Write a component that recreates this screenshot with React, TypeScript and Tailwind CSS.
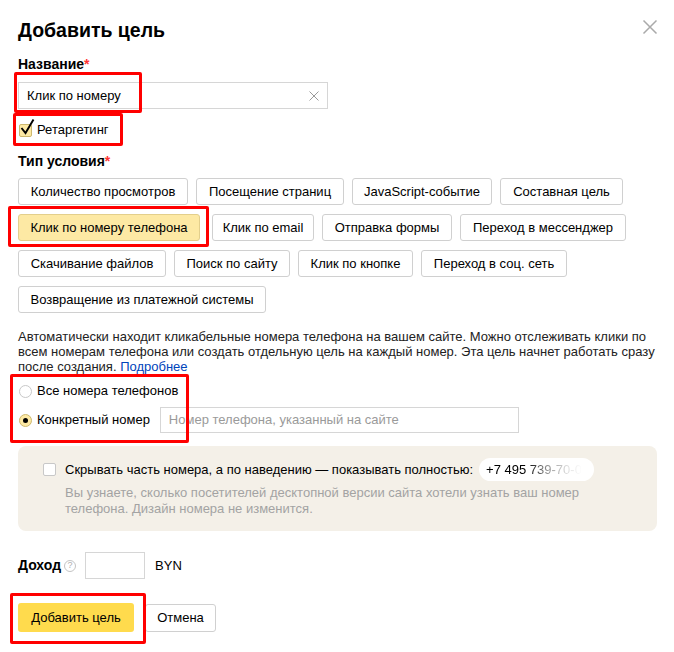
import React from "react";

const btn =
  "h-[27px] border border-[#d0d0d0] rounded-[3px] bg-white text-[13px] text-black flex items-center justify-center whitespace-nowrap";

function Btn({ w, children, sel, extra }: { w: string; children: React.ReactNode; sel?: boolean; extra?: string }) {
  return (
    <div
      className={
        sel
          ? `h-[27px] border border-[#e3cf8c] rounded-[3px] bg-[#fde9a4] text-[13px] text-black flex items-center justify-center whitespace-nowrap ${w} ${extra ?? ""}`
          : `${btn} ${w} ${extra ?? ""}`
      }
    >
      {children}
    </div>
  );
}

export default function App() {
  return (
    <div
      className="relative w-[674px] h-[652px] bg-white text-black overflow-hidden"
      style={{ fontFamily: '"Liberation Sans", Arial, sans-serif' }}
    >
      <div className="flex flex-col pl-[18px] pt-[16px]">
        <div className="text-[19.5px] leading-[28px] font-bold">Добавить цель</div>

        <div className="mt-[12px] text-[14px] leading-[16px] font-bold">
          Название<span className="text-[#ff3333]">*</span>
        </div>

        <div className="mt-[10px] w-[310px] h-[27px] border border-[#d6d6d6] flex items-center justify-between pl-[8px] pr-[8px]">
          <span className="text-[13px]">Клик по номеру</span>
          <svg width="10" height="10" viewBox="0 0 10 10">
            <path d="M0.5 0.5L9.5 9.5M9.5 0.5L0.5 9.5" stroke="#9a9a9a" strokeWidth="1" />
          </svg>
        </div>

        <div className="mt-[13px] h-[16px] flex items-center">
          <div className="relative w-[13px] h-[13px] ml-[1px] rounded-[2px] border border-[#cdb86e] bg-[#fde9a4]">
            <svg className="absolute left-[0px] top-[-7px]" width="15" height="18" viewBox="0 0 15 18">
              <path d="M1.5 10L5.5 15L13.5 1.5" stroke="#000" strokeWidth="1.9" fill="none" />
            </svg>
          </div>
          <span className="ml-[5px] text-[13px]">Ретаргетинг</span>
        </div>

        <div className="mt-[15px] text-[14px] leading-[16px] font-bold">
          Тип условия<span className="text-[#ff3333]">*</span>
        </div>

        <div className="mt-[9px] flex flex-col gap-[9px]">
          <div className="flex gap-[8px]">
            <Btn w="w-[170px]">Количество просмотров</Btn>
            <Btn w="w-[148px]">Посещение страниц</Btn>
            <Btn w="w-[140px]">JavaScript-событие</Btn>
            <Btn w="w-[123px]">Составная цель</Btn>
          </div>
          <div className="flex gap-[8px]">
            <Btn w="w-[182px]" sel>
              Клик по номеру телефона
            </Btn>
            <Btn w="w-[102px]" extra="ml-[4px]">
              Клик по email
            </Btn>
            <Btn w="w-[130px]">Отправка формы</Btn>
            <Btn w="w-[166px]">Переход в мессенджер</Btn>
          </div>
          <div className="flex gap-[8px]">
            <Btn w="w-[148px]">Скачивание файлов</Btn>
            <Btn w="w-[116px]">Поиск по сайту</Btn>
            <Btn w="w-[115px]">Клик по кнопке</Btn>
            <Btn w="w-[146px]">Переход в соц. сеть</Btn>
          </div>
          <div className="flex gap-[8px]">
            <Btn w="w-[248px]">Возвращение из платежной системы</Btn>
          </div>
        </div>

        <div className="mt-[16px] text-[13px] leading-[15px] text-[#222] whitespace-nowrap">
          Автоматически находит кликабельные номера телефона на вашем сайте. Можно отслеживать клики по
          <br />
          всем номерам телефона или создать отдельную цель на каждый номер. Эта цель начнет работать сразу
          <br />
          после создания. <span className="text-[#0044bb]">Подробнее</span>
        </div>

        <div className="mt-[9px] h-[16px] flex items-center">
          <div className="w-[13px] h-[13px] ml-[1px] rounded-full border border-[#c8c8c8] bg-white" />
          <span className="ml-[5px] text-[13px]">Все номера телефонов</span>
        </div>

        <div className="mt-[8px] h-[26px] flex items-center">
          <div className="w-[13px] h-[13px] ml-[1px] rounded-full border border-[#cdb86e] bg-[#fde9a4] flex items-center justify-center">
            <div className="w-[5px] h-[5px] rounded-full bg-black" />
          </div>
          <span className="ml-[5px] text-[13px]">Конкретный номер</span>
          <div className="ml-[10px] w-[359px] h-[26px] border border-[#d6d6d6] flex items-center pl-[8px] text-[13px] text-[#9a9a9a]">
            Номер телефона, указанный на сайте
          </div>
        </div>

        <div className="mt-[13px] w-[639px] rounded-[8px] bg-[#f4f0e8] pl-[25px] pt-[12px] pb-[14px]">
          <div className="h-[23px] flex items-center">
            <div className="w-[13px] h-[13px] rounded-[2px] border border-[#c8c8c8] bg-white" />
            <span className="ml-[9px] text-[13px]">
              Скрывать часть номера, а по наведению — показывать полностью:
            </span>
            <div className="ml-[6px] w-[115px] h-[23px] rounded-full bg-white flex items-center pl-[7px] text-[13px]">
              <span className="bg-[linear-gradient(90deg,#000_0%,#000_42%,#888_62%,#ddd_85%,#fff_100%)] bg-clip-text text-transparent">
                +7 495 739-70-0
              </span>
            </div>
          </div>
          <div className="mt-[4px] pl-[22px] text-[13px] leading-[16px] text-[#a3a3a3] whitespace-nowrap">
            Вы узнаете, сколько посетителей десктопной версии сайта хотели узнать ваш номер
            <br />
            телефона. Дизайн номера не изменится.
          </div>
        </div>

        <div className="mt-[21px] h-[27px] flex items-center">
          <span className="text-[14px] font-bold">Доход</span>
          <div className="ml-[3px] w-[12px] h-[12px] rounded-full border border-[#c4c4c4] flex items-center justify-center text-[9px] leading-none text-[#b0b0b0]">
            ?
          </div>
          <div className="ml-[9px] w-[60px] h-[27px] border border-[#d6d6d6]" />
          <span className="ml-[10px] text-[13px]">BYN</span>
        </div>

        <div className="mt-[24px] flex items-center">
          <div className="w-[116px] h-[29px] rounded-[3px] bg-[#ffdb4d] flex items-center justify-center text-[13px]">
            Добавить цель
          </div>
          <div className="ml-[11px] w-[71px] h-[28px] rounded-[3px] border border-[#d0d0d0] bg-white flex items-center justify-center text-[13px]">
            Отмена
          </div>
        </div>
      </div>

      {/* close */}
      <svg className="absolute left-[642px] top-[19px]" width="16" height="16" viewBox="0 0 16 16">
        <path d="M1.5 1.5L14.5 14.5M14.5 1.5L1.5 14.5" stroke="#aaa" strokeWidth="1.5" />
      </svg>

      {/* red annotation boxes */}
      <div className="absolute left-[14px] top-[72px] w-[128px] h-[41px] border-[3px] border-[#ff0000] rounded-[2px]" />
      <div className="absolute left-[13px] top-[113px] w-[110px] h-[33px] border-[3px] border-[#ff0000] rounded-[2px]" />
      <div className="absolute left-[8px] top-[206px] w-[201px] h-[41px] border-[3px] border-[#ff0000] rounded-[2px]" />
      <div className="absolute left-[10px] top-[374px] w-[179px] h-[69px] border-[3px] border-[#ff0000] rounded-[2px]" />
      <div className="absolute left-[10px] top-[593px] w-[136px] h-[51px] border-[3px] border-[#ff0000] rounded-[2px]" />
    </div>
  );
}
